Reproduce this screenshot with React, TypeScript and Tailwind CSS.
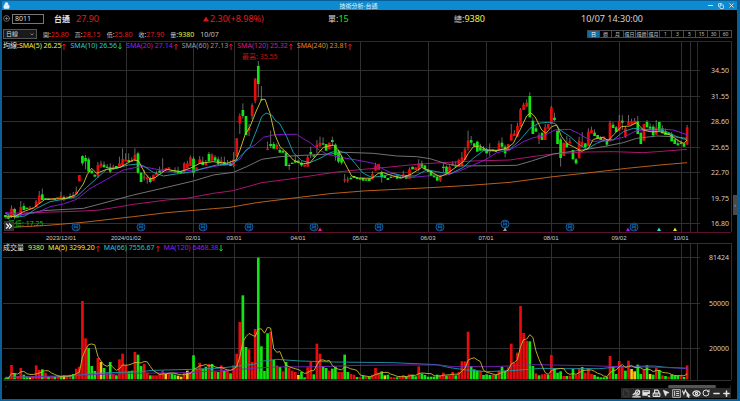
import { ChevronsRight, Lock, Minus, Plus, RotateCw, Eye, X, Copy, CirclePlus, File, MousePointer2 } from "lucide-react";
import { useState } from "react";

// Plot data is kept on a grid three times finer than the svg units.
const STEP = 9.255;
const FIRST = 16;

const COLORS: Record<string, string> = { r: "#e80c0c", g: "#12e612", y: "#ffc21a" };

// colour, body top, body bottom, optional wick top, optional wick bottom
const CANDLES = [
  {
    start: 0,
    base: 420,
    rows:
      "g225,232 g229,236,224,238 r206,230,196,234 g207,230,203,238 g228,232 r201,224,183,228 g198,210,190 g203,207 r203,208,198 r203,206 r184,202,180 r166,190,153 g163,180,146 g175,178 g176,180 r175,178 g175,179 r171,177 r168,175,155 g171,177,166,184 r170,175 g168,173,160 r165,172,156 r155,163,140 r105,124 " +
      "g48,70,46,76 g54,64,45,88 g58,95,52 g92,100 g104,110 r75,109,66,114 r70,80,62,84 g74,82,64 g80,84,72 g82,95,70,100 r80,90,74 g78,86 r70,84,50 r57,78,25 r58,64,40 g60,66,40 r60,66,52 r44,62,25 g40,98,35,102 g98,126 r110,115,90,122 r112,118,106,131 g115,126,110,130 r104,122 r100,106,92 " +
      "g92,98,80 r88,96,55 r85,92 r82,88 g90,94 g92,97,82 g92,99,80 g94,100 r70,100,66 r70,85,62 r52,78,46 g56,98,50,110 r82,92 r58,72,48 g65,75,50 r68,76,60 g42,64,36 r44,62,40 g52,62,46 g58,72,50,78 r62,75,50 g66,76,50 r70,76,60 g70,78,62 r58,78,36,82",
  },
  {
    start: 75,
    base: 150,
    rows:
      "r265,320 r198,220,190,252 g180,198,160,206 g198,255 r234,242,222,258 r165,198,160,208 r86,152,84,160 g48,102,33,142 g148,151,108 - r296,300,275 g282,288,242,294 g282,296,276 r285,298,280 g300,308,294 g302,308 g308,348,304 g345,348,340,360 g338,342 g332,338,318 g332,338 g338,346,334,350 r344,350 r322,350,316 g306,312,290,324 " +
      "g316,320 r284,292,270,310 r278,288,260,292 g280,284,262 g282,302 r278,298 g270,276,260,288 g284,315,280,332 g305,335,300,340 g320,338,314,344 r388,392,372,398 r388,392,380,398 g384,388,378 g378,384 g383,387 g385,389 g384,392 g388,392 g386,393 r372,388,364 r348,362,338 r342,360 g367,382,362,398 g376,384 g384,390 " +
      "g380,384 r377,382 g376,386 g380,385 r373,382,362 g375,386 r358,386,352 g350,358 r352,360 r340,358,328,364 g340,350,332 g346,358 g358,366 g362,378 g374,382 g380,392,376 r378,392,374,396 g350,354,340,366 g350,370,346 r350,372,346 r340,348,334 g346,350,334 r330,350,326 r322,348,306 r298,330,292",
  },
  {
    start: 150,
    base: 240,
    rows:
      "r182,205,152,212 g180,188,168,196 g190,198 g185,215,182 g202,212,192 g206,212,198 g208,220,204 r208,216,190,228 g208,214 g210,216 r190,212,182 g188,200,172,208 g200,220,194,232 r192,212 r162,182,132 r160,168,150 r138,170,128 r88,140,84 r74,90,68 r68,80,58 g48,112,37 g122,162,112 g145,155,136 r165,178,158,192 g158,180 " +
      "r142,180,132 r132,146 r82,132,78 g113,120,98,124 g152,192 g178,234,172,260 r188,228 g190,202,168 r184,190,174 g210,238 g238,250,234,254 r182,235,170 r186,200,156 g190,202 r155,198,145 r150,160,140 g158,168,148 g165,175 g172,180,168 r170,184 g182,194,178,200 r128,184,122 g134,144,126 g142,156,138 r122,152,105 " +
      "g122,128,106,150 r145,170,140,174 r126,135,105 r124,134,116 r122,132,114 g124,162,108 g158,192 r132,182 g126,142,120 g140,146,130 g140,166,134,172 r142,164,120 g126,152 g145,160,136 g155,165,146 g158,165 g162,184,156 g178,192 g190,196,178 g188,192,182 g190,200 r142,194,135",
  },
];

const VOLUMES =
  "g3 g5 r43 g18 r10 r34 g14 g9 y6 r10 r42 r28 g30 r20 g8 r8 g8 r9 g8 y13 r9 r14 g16 r32 r38 r235 r123 g94 g40 g25 r64 y52 g34 r20 g52 r16 g12 r60 r77 r44 g24 g26 r82 g74 g40 r46 r20 g12 r12 r12 r18 r26 y16 r18 g17 g14 y11 y8 r20 y26 r22 g72 r32 r50 g32 g38 r46 g46 r24 g22 r42 g25 r28 g18 r42 " +
  "r77 r172 g252 g97 r90 r52 r151 g365 g99 g25 g138 r142 g58 r42 g37 r24 g52 r34 r26 r22 y13 g22 g6 r36 r52 g15 r107 r77 g40 g34 r26 g32 g38 r22 r22 g74 g22 r16 r14 g7 r7 g11 r8 g8 r14 r34 r20 g24 y12 g14 r7 r6 g6 r8 r13 g9 r15 g14 g9 r39 g17 g13 g8 g8 g8 g14 r12 r20 g11 r12 r22 g12 r22 r54 r54 " +
  "r143 g40 g30 g26 r26 g13 g15 g13 r14 g13 r26 g38 g24 r36 r107 r50 r80 r220 r139 r116 g114 g40 r18 g12 r15 r16 g14 r73 g33 g20 g24 r10 g10 r11 g31 r14 r34 g37 r20 r34 r16 g13 g8 g6 g6 g8 r70 g40 g16 r55 r40 g26 r56 y31 y24 g44 g16 r28 g42 y16 g14 r34 g28 r12 g10 r8 g14 g12 g11 r9 g7 r42";

const PRICE_LINES = [
  { color: "#c8651b", points: "16,683 130,677 250,667 400,650 500,638 640,626 690,622 770,608 890,593 990,581 1090,573 1190,568 1290,563 1410,556 1530,547 1660,530 1780,517 1880,505 1980,495 2061,488" },
  { color: "#b81478", points: "16,640 130,637 250,633 300,630 400,613 500,600 560,595 640,580 700,572 785,548 870,537 950,525 1010,516 1090,508 1160,502 1230,495 1290,490 1420,483 1530,480 1610,468 1670,461 1760,456 1840,455 1930,458 2000,453 2061,448" },
  { color: "#7b7b7b", points: "16,655 60,645 130,632 250,625 300,612 400,585 500,562 580,543 640,525 700,517 740,500 785,478 840,470 890,467 990,462 1035,457 1120,460 1190,468 1250,470 1290,476 1340,492 1380,498 1480,497 1550,496 1595,483 1660,462 1710,455 1760,448 1810,440 1870,428 1910,415 1970,408 2020,410 2061,415" },
  { color: "#8a1bd6", points: "16,637 60,645 110,638 150,620 190,612 230,598 270,566 320,538 370,510 410,502 430,500 480,510 520,516 560,512 600,508 650,498 690,493 720,478 738,450 765,435 790,412 820,405 850,403 890,403 908,415 930,428 955,448 980,462 1020,472 1070,480 1120,490 1155,510 1190,525 1230,533 1280,528 1340,525 1380,512 1420,495 1455,480 1490,458 1530,450 1570,425 1600,413 1630,408 1665,390 1710,388 1735,400 1755,412 1780,424 1825,422 1870,412 1910,392 1960,392 1980,387 2020,390 2061,404" },
  { color: "#18a5b5", points: "16,640 45,652 75,648 110,625 150,605 190,598 230,590 260,562 290,535 320,508 350,505 385,495 415,492 430,498 460,517 490,528 540,520 580,515 610,505 650,495 700,492 720,470 750,440 770,390 785,350 798,339 815,345 825,360 840,372 860,410 880,458 905,482 930,488 960,475 990,458 1015,452 1040,460 1065,490 1090,520 1115,532 1150,528 1180,520 1210,528 1245,528 1280,510 1310,515 1350,522 1390,502 1420,475 1450,452 1500,450 1530,448 1560,420 1590,385 1615,370 1642,367 1665,370 1680,390 1710,410 1735,432 1760,448 1790,430 1820,418 1840,420 1870,395 1900,385 1930,388 1970,388 2000,395 2030,410 2061,420" },
  { color: "#cdc23a", points: "16,648 45,650 70,635 100,624 135,598 165,597 200,595 228,584 250,552 262,523 275,505 290,520 320,508 360,502 400,480 415,482 435,520 450,537 465,533 500,508 540,515 570,505 600,490 640,485 680,490 708,480 720,450 735,405 750,380 770,330 785,298 795,298 810,340 825,405 840,440 860,458 880,480 905,492 930,488 950,465 970,442 1000,435 1015,450 1035,490 1055,528 1075,534 1115,535 1135,520 1150,518 1180,528 1205,534 1235,522 1265,502 1290,514 1320,530 1340,522 1370,500 1390,485 1405,460 1420,440 1440,438 1460,450 1490,452 1520,445 1540,430 1560,390 1580,348 1592,338 1605,350 1625,390 1638,400 1655,380 1670,375 1685,410 1700,430 1720,440 1745,454 1765,445 1780,418 1810,412 1825,422 1840,405 1865,380 1890,378 1910,368 1930,390 1950,395 1980,395 2010,405 2040,425 2052,430 2061,420" },
];

const VOLUME_LINES = [
  { color: "#1b95a5", points: "16,1132 200,1130 280,1120 420,1115 460,1111 580,1108 650,1105 700,1100 760,1093 790,1083 830,1078 900,1083 1000,1086 1180,1088 1310,1094 1350,1103 1400,1110 1460,1115 1530,1112 1590,1108 1620,1105 1700,1106 1800,1106 1860,1100 1960,1098 2000,1102 2061,1105" },
  { color: "#7722b8", points: "16,1133 250,1125 400,1120 560,1118 700,1110 770,1104 830,1101 960,1100 1080,1096 1200,1095 1320,1095 1360,1100 1480,1100 1610,1094 1760,1097 1860,1100 1980,1102 2061,1105" },
];

const MONTHS = [
  { x: 61, label: "2023/12/01" },
  { x: 126, label: "2024/01/02" },
  { x: 193, label: "02/01" },
  { x: 234, label: "03/01" },
  { x: 298, label: "04/01" },
  { x: 360, label: "05/02" },
  { x: 428, label: "06/03" },
  { x: 486, label: "07/01" },
  { x: 551, label: "08/01" },
  { x: 619, label: "09/02" },
  { x: 681, label: "10/01" },
];

const PRICES = ["34.50", "31.55", "28.60", "25.65", "22.70", "19.75", "16.80"];

const VOLUME_TICKS = [
  { y: 258, label: "81424" },
  { y: 304, label: "50000" },
  { y: 349, label: "20000" },
];

const BADGES = [
  { x: 76, y: 227 },
  { x: 141, y: 227 },
  { x: 203, y: 227 },
  { x: 249, y: 227 },
  { x: 314, y: 227 },
  { x: 379, y: 227 },
  { x: 440, y: 227 },
  { x: 505, y: 224 },
  { x: 570, y: 227 },
  { x: 634, y: 227 },
];

const MARKERS = [
  { x: 320, color: "#e0208c" },
  { x: 505, color: "#8f9a9a" },
  { x: 628, color: "#a31be0" },
  { x: 659, color: "#35d5e0" },
  { x: 675, color: "#e6e23a" },
];

const QUOTES = [
  { label: "開", value: "25.80", color: "text-[#e01c1c]" },
  { label: "高", value: "28.15", color: "text-[#e01c1c]" },
  { label: "低", value: "25.80", color: "text-[#e01c1c]" },
  { label: "收", value: "27.90", color: "text-[#e01c1c]" },
  { label: "量", value: "9380", color: "text-[#f0f040]" },
];

const SMA = [
  { text: "SMA(10) 26.56", color: "text-[#24cbdc]", up: false },
  { text: "SMA(20) 27.14", color: "text-[#9c22ea]", up: true },
  { text: "SMA(60) 27.13", color: "text-[#9a9a9a]", up: true },
  { text: "SMA(120) 25.32", color: "text-[#d81c94]", up: true },
  { text: "SMA(240) 23.81", color: "text-[#ee841e]", up: true },
];

const PERIODS = ["日", "週", "月", "還日", "還週", "還月", "1", "3", "5", "15", "30", "60"];

function Arrow({ up }: { up: boolean }) {
  return (
    <svg viewBox="0 0 4 7" className="ml-px inline-block h-[7px] w-1" fill="none" stroke={up ? "#e01414" : "#19c819"}>
      <path d={up ? "M2 7V1M0.5 2.8L2 1L3.5 2.8" : "M2 0V6M0.5 4.2L2 6L3.5 4.2"} />
    </svg>
  );
}

function Grid({ top, bottom }: { top: number; bottom: number }) {
  return (
    <g stroke="#303030" shapeRendering="crispEdges">
      {[...MONTHS.map((m) => m.x), 690].map((x) => (
        <line key={x} x1={x + 0.5} x2={x + 0.5} y1={top} y2={bottom} />
      ))}
      <line x1="731.5" x2="731.5" y1={top} y2={bottom} />
    </g>
  );
}

function Lines({ lines }: { lines: { color: string; points: string }[] }) {
  return (
    <g fill="none" strokeWidth="2.8" strokeLinejoin="round">
      {lines.map((line) => (
        <polyline key={line.color} points={line.points} stroke={line.color} />
      ))}
    </g>
  );
}

function Candles() {
  return (
    <>
      {CANDLES.map((part) =>
        part.rows.split(" ").map((row, i) => {
          if (row === "-") return null;
          const [top, bottom, high = top, low = bottom] = row.slice(1).split(",").map(Number);
          const x = FIRST + (part.start + i) * STEP;
          return (
            <g key={part.start + i}>
              <line x1={x} x2={x} y1={part.base + high} y2={part.base + low} stroke="#9a9a9a" strokeWidth="2" />
              <rect x={x - 4} y={part.base + top} width="8" height={bottom - top} fill={COLORS[row[0]]} />
            </g>
          );
        })
      )}
    </>
  );
}

function PriceChart() {
  return (
    <svg viewBox="2 41 735 202" className="block h-auto w-full" role="img" aria-label="日線圖">
      <Grid top={41} bottom={232} />
      <g stroke="#303030" shapeRendering="crispEdges">
        {PRICES.map((price, i) => (
          <line key={price} x1="3" x2="700" y1={70.5 + Math.round(i * 25.5)} y2={70.5 + Math.round(i * 25.5)} />
        ))}
      </g>
      <g stroke="#5a1230" shapeRendering="crispEdges">
        <line x1="3" x2="731" y1="41.5" y2="41.5" />
        <line x1="3" x2="731" y1="232.5" y2="232.5" />
        <line x1="697.5" x2="697.5" y1="41" y2="232" />
      </g>
      <g transform="scale(0.33333)">
        <Candles />
        <Lines lines={PRICE_LINES} />
      </g>
      <g fontSize="7" fill="#cfcfcf" textAnchor="end">
        {PRICES.map((price, i) => (
          <text key={price} x="729" y={73 + Math.round(i * 25.5)}>{price}</text>
        ))}
      </g>
      <g fontSize="6" fill="#cfcfcf" textAnchor="middle" className="font-['Liberation_Sans',sans-serif]">
        {MONTHS.map((m) => (
          <text key={m.label} x={m.x} y="240">{m.label}</text>
        ))}
      </g>
      <text x="242" y="59" fontSize="7" fill="#c81414">最高: 35.55</text>
      <text x="8" y="226" fontSize="7" fill="#1cc01c">最低: 17.25</text>
      <g fontSize="6" fill="#1a78c6" textAnchor="middle">
        {BADGES.map((b) => (
          <g key={b.x}>
            <circle cx={b.x} cy={b.y} r="4" fill="#020c18" stroke="#0f5a9e" />
            <text x={b.x} y={b.y + 2}>月</text>
          </g>
        ))}
      </g>
      {MARKERS.map((m) => (
        <path key={m.x} d={`M${m.x - 2} 231L${m.x} 227.5L${m.x + 2} 231Z`} fill={m.color} />
      ))}
    </svg>
  );
}

function VolumeChart() {
  const bars = VOLUMES.split(" ").map((v) => ({ color: COLORS[v[0]], size: Number(v.slice(1)) }));
  const average = bars
    .map((_, i) => {
      const part = bars.slice(Math.max(0, i - 4), i + 1);
      const mean = part.reduce((sum, bar) => sum + bar.size, 0) / part.length;
      return `${FIRST + i * STEP},${1138 - mean}`;
    })
    .join(" ");

  return (
    <svg viewBox="2 243 735 141" className="block h-auto w-full" role="img" aria-label="成交量圖">
      <Grid top={243} bottom={380} />
      <g stroke="#303030" shapeRendering="crispEdges">
        <line x1="3" x2="731" y1="243.5" y2="243.5" />
        <line x1="3" x2="731" y1="380.5" y2="380.5" />
        <line x1="697.5" x2="697.5" y1="243" y2="380" />
        {VOLUME_TICKS.map((t) => (
          <line key={t.label} x1="3" x2="700" y1={t.y - 0.5} y2={t.y - 0.5} />
        ))}
      </g>
      <g transform="scale(0.33333)">
        {bars.map((bar, i) => (
          <rect key={i} x={FIRST + i * STEP - 4} y={1138 - bar.size} width="8" height={bar.size} fill={bar.color} />
        ))}
        <Lines lines={[...VOLUME_LINES, { color: "#c4b630", points: average }]} />
      </g>
      <g fontSize="7" fill="#cfcfcf" textAnchor="end">
        {VOLUME_TICKS.map((t) => (
          <text key={t.label} x="729" y={t.y + 2}>{t.label}</text>
        ))}
      </g>
    </svg>
  );
}

function DrawIcon() {
  return (
    <svg viewBox="0 0 24 24" className="size-[9px]" fill="none" stroke="currentColor" strokeWidth="3">
      <path d="M1 21h22M2 16l7-6M7 15c4 2 9 2 13-1" />
      <circle cx="15" cy="8" r="5.5" />
      <path d="M11 13l7-8" />
    </svg>
  );
}

function PanelIcon() {
  return (
    <svg viewBox="0 0 24 24" className="size-[9px]" fill="currentColor">
      <path d="M1 3h20v10h-6v5H1z" />
      <path d="M14 15l4 2 1-2 4 7-8-1 2-2z" />
      <path d="M4 7h14" stroke="#292929" strokeWidth="2" />
    </svg>
  );
}

function PrintIcon() {
  return (
    <svg viewBox="0 0 24 24" className="size-[9px]" fill="none" stroke="currentColor" strokeWidth="3">
      <path d="M7 11V3h8l3 3v5" />
      <rect x="3" y="11" width="18" height="9" rx="2" />
      <path d="M7 16h10" />
    </svg>
  );
}

function ListIcon() {
  return (
    <svg viewBox="0 0 24 24" className="size-[9px]" fill="none" stroke="currentColor" strokeWidth="2">
      <rect x="2" y="2" width="20" height="20" />
      <path d="M7 5v14M11 7h8M11 12h8M11 17h8" strokeWidth="2.5" />
    </svg>
  );
}

function WaveIcon() {
  return (
    <svg viewBox="0 0 24 24" className="size-[9px]" fill="none" stroke="currentColor" strokeWidth="3">
      <path d="M1 4l4 10L9 3l4 8" />
      <path d="M13 8l9 9-4 1 2 4-3 1-2-4-2 2z" fill="currentColor" strokeWidth="1" />
    </svg>
  );
}

const TOOLS = [
  { label: "文件", icon: <File className="size-2 text-[#4a4a4a]" /> },
  { label: "畫線", icon: <DrawIcon /> },
  { label: "畫面", icon: <PanelIcon /> },
  { label: "列印", icon: <PrintIcon /> },
  { label: "游標", icon: <MousePointer2 className="size-2" fill="currentColor" /> },
  { label: "清單", icon: <ListIcon /> },
  { label: "波段", icon: <WaveIcon /> },
  { label: "顯示", icon: <Eye className="size-[9px]" strokeWidth={3} /> },
  { label: "重設", icon: <RotateCw className="size-2" strokeWidth={3} /> },
  { label: "縮小", icon: <Minus className="size-[9px]" strokeWidth={4} /> },
  { label: "放大", icon: <Plus className="size-[9px]" strokeWidth={4} /> },
];

export default function App() {
  const [period, setPeriod] = useState("日");
  const [code, setCode] = useState("8011");

  return (
    <div className="border-b-2 border-l-2 border-r-3 border-[#0a5f98] bg-black font-['Noto_Sans','Noto_Sans_CJK_TC',sans-serif] text-[7px] leading-none text-[#d6d6d6]">
      <header className="flex h-[10px] items-center border-t border-[#0a5f98] bg-[#0d8bd1] px-px text-[#e4f3fb]">
        <Lock className="size-[7px]" fill="currentColor" />
        <h1 className="flex-1 text-center text-[6px]">技術分析-台通</h1>
        <div className="flex gap-1 pr-px">
          <button aria-label="最小化"><Minus className="size-[7px]" strokeWidth={3} /></button>
          <button aria-label="還原"><Copy className="size-[6px]" strokeWidth={3} /></button>
          <button aria-label="關閉"><X className="size-[7px]" strokeWidth={3} /></button>
        </div>
      </header>

      <section className="grid h-[17px] grid-cols-[201fr_125fr_126fr_127fr_156fr] items-center text-[9px]">
        <div className="flex items-center">
          <CirclePlus className="ml-px size-[7px] text-[#aaa]" />
          <input
            aria-label="股票代號"
            value={code}
            onChange={(e) => setCode(e.target.value)}
            className="ml-[2px] h-[10px] w-8 border border-[#777] bg-black px-[2px] text-[7px] text-[#ddd] outline-none"
          />
          <span className="ml-[10px] text-[8px] font-bold text-[#e0e0e0]">台通</span>
          <span className="ml-[6px] text-[#e01c1c]">27.90</span>
        </div>
        <div className="flex items-center text-[#e01c1c]">
          <svg viewBox="0 0 6 6" className="mr-px size-[6px]"><path d="M3 0.5L6 5.5H0Z" fill="#e01414" /></svg>
          2.30(+8.98%)
        </div>
        <div><span className="text-[8px]">單</span>:<span className="text-[#1ce81c]">15</span></div>
        <div><span className="text-[8px]">總</span>:<span className="text-[#f0f040]">9380</span></div>
        <time>10/07 14:30:00</time>
      </section>

      <section className="flex h-[14px] items-center pl-px pr-[5px]">
        <div className="relative mr-[6px] flex">
          <select aria-label="週期" className="h-[10px] w-[34px] appearance-none border border-[#555] bg-[#181a1c] pl-[2px] text-[6px] leading-none text-[#ddd]">
            <option>日線</option>
            <option>週線</option>
            <option>月線</option>
          </select>
          <svg viewBox="0 0 4 3" className="pointer-events-none absolute right-[3px] top-1 h-[3px] w-1">
            <path d="M0.5 0.5L2 2L3.5 0.5" fill="none" stroke="#999" strokeWidth="0.8" />
          </svg>
        </div>
        <div className="flex gap-[6px] text-[#c4c4c4]">
          {QUOTES.map((q) => (
            <span key={q.label} className="whitespace-nowrap">
              <span className="text-[6px]">{q.label}</span>:<span className={q.color}>{q.value}</span>
            </span>
          ))}
          <span>10/07</span>
        </div>
        <div className="ml-auto flex border-l border-[#4a4a4a]">
          {PERIODS.map((p) => (
            <button
              key={p}
              onClick={() => setPeriod(p)}
              className={`h-2 w-3 whitespace-nowrap border-y border-r border-[#4a4a4a] text-[5px] leading-none ${p === period ? "bg-[#0d6ea8] text-white" : "text-[#c0c0c0]"}`}
            >
              {p}
            </button>
          ))}
        </div>
      </section>

      <main className="relative">
        <div className="relative">
          <PriceChart />
          <div className="absolute left-px top-0 flex gap-1 whitespace-nowrap leading-[9px]">
            <span className="text-[#f0f040]"><span className="text-[#e6e6e6]">均線:</span>SMA(5) 26.25<Arrow up /></span>
            {SMA.map((s) => (
              <span key={s.text} className={s.color}>{s.text}<Arrow up={s.up} /></span>
            ))}
          </div>
          <button aria-label="展開" className="absolute bottom-[12px] left-[2px] bg-[#333] text-white">
            <ChevronsRight className="size-[10px]" strokeWidth={3} />
          </button>
          <button aria-label="側欄" className="absolute bottom-[28px] right-0 h-5 w-1 bg-[#4a4a4a] text-[5px]">‹</button>
        </div>
        <div className="relative">
          <VolumeChart />
          <div className="absolute left-px top-0 flex gap-1 whitespace-nowrap leading-[9px]">
            <span className="text-[#e6e6e6]">成交量</span>
            <span className="text-[#f0f040]">9380</span>
            <span className="text-[#f0f040]">MA(5) 3299.20<Arrow up /></span>
            <span className="text-[#24cbdc]">MA(66) 7556.67<Arrow up /></span>
            <span className="text-[#9c22ea]">MA(120) 6468.38<Arrow up={false} /></span>
          </div>
        </div>
      </main>

      <footer className="pb-px pr-[6px]">
        <div className="flex h-[4px] items-center pl-[3px] text-[5px] text-[#666]">
          <span>‹</span>
          <div className="ml-auto mr-[13px] h-[3px] w-12 rounded-full bg-[#555]" />
          <span>›</span>
        </div>
        <div className="flex justify-end">
          {TOOLS.map((tool) => (
            <button key={tool.label} aria-label={tool.label} className="flex h-[10px] w-[10px] items-center justify-center bg-[#292929] text-[#e4e4e4]">
              {tool.icon}
            </button>
          ))}
        </div>
      </footer>
    </div>
  );
}
